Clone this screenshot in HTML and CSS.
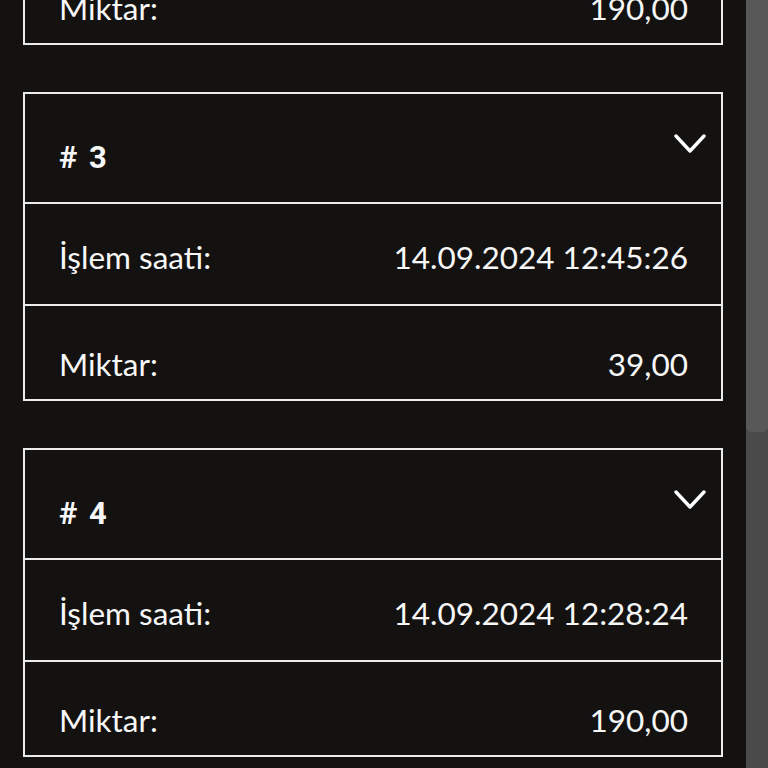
FILE: index.html
```html
<!DOCTYPE html>
<html lang="tr">
<head>
<meta charset="utf-8">
<title>İşlemler</title>
<link rel="stylesheet" href="styles.css">
</head>
<body>
<div class="screen">
  <main class="list">
    <section class="card">
      <div class="card-head">
        <span class="num"># 2</span>
        <svg class="chev" width="32" height="19" viewBox="0 0 32 19"><polyline points="2,2 16,17 30,2" fill="none" stroke="#fff" stroke-width="3.4" stroke-linecap="round" stroke-linejoin="round"/></svg>
      </div>
      <div class="row row-time"><span>İşlem saati:</span><span>14.09.2024 13:02:41</span></div>
      <div class="row row-amount"><span>Miktar:</span><span>190,00</span></div>
    </section>
    <section class="card">
      <div class="card-head">
        <span class="num"># 3</span>
        <svg class="chev" width="32" height="19" viewBox="0 0 32 19"><polyline points="2,2 16,17 30,2" fill="none" stroke="#fff" stroke-width="3.4" stroke-linecap="round" stroke-linejoin="round"/></svg>
      </div>
      <div class="row row-time"><span>İşlem saati:</span><span>14.09.2024 12:45:26</span></div>
      <div class="row row-amount"><span>Miktar:</span><span>39,00</span></div>
    </section>
    <section class="card">
      <div class="card-head">
        <span class="num"># 4</span>
        <svg class="chev" width="32" height="19" viewBox="0 0 32 19"><polyline points="2,2 16,17 30,2" fill="none" stroke="#fff" stroke-width="3.4" stroke-linecap="round" stroke-linejoin="round"/></svg>
      </div>
      <div class="row row-time"><span>İşlem saati:</span><span>14.09.2024 12:28:24</span></div>
      <div class="row row-amount"><span>Miktar:</span><span>190,00</span></div>
    </section>
  </main>
  <div class="scrollbar"><div class="thumb"></div></div>
</div>
</body>
</html>
```

FILE: styles.css
```css
* { box-sizing: border-box; }
html, body { margin: 0; padding: 0; background: #141211; }
.screen {
  display: flex;
  height: 768px;
  overflow: hidden;
  background: #141211;
  color: #f7f7f7;
}
.list {
  flex: 1;
  display: flex;
  flex-direction: column;
  gap: 47px;
  padding: 0 23px 0 23px;
  margin-top: -264px;
}
.card {
  flex: none;
  border: 2px solid #ececec;
}
.card-head {
  height: 110px;
  display: flex;
  justify-content: space-between;
  align-items: flex-start;
  padding: 40px 15px 0 34px;
  border-bottom: 2px solid #ececec;
}
.num {
  font-family: Roboto, "Liberation Sans", sans-serif;
  font-weight: 700;
  font-size: 31px;
  line-height: 32px;
  margin-top: 8px;
  word-spacing: 4px;
}
.chev { display: block; }
.row {
  display: flex;
  justify-content: space-between;
  align-items: flex-start;
  padding: 0 33px 0 34px;
  font-family: Lato, "Noto Sans", sans-serif;
  font-size: 31.5px;
  line-height: 32px;
}
.row-time {
  height: 102px;
  padding-top: 37px;
  border-bottom: 2px solid #ececec;
}
.row-amount {
  height: 93px;
  padding-top: 42px;
}
.scrollbar {
  width: 22px;
  height: 768px;
  background: #4b4b4b;
}
.thumb {
  height: 432px;
  background: #585858;
  border-radius: 0 0 6px 6px;
}
```
